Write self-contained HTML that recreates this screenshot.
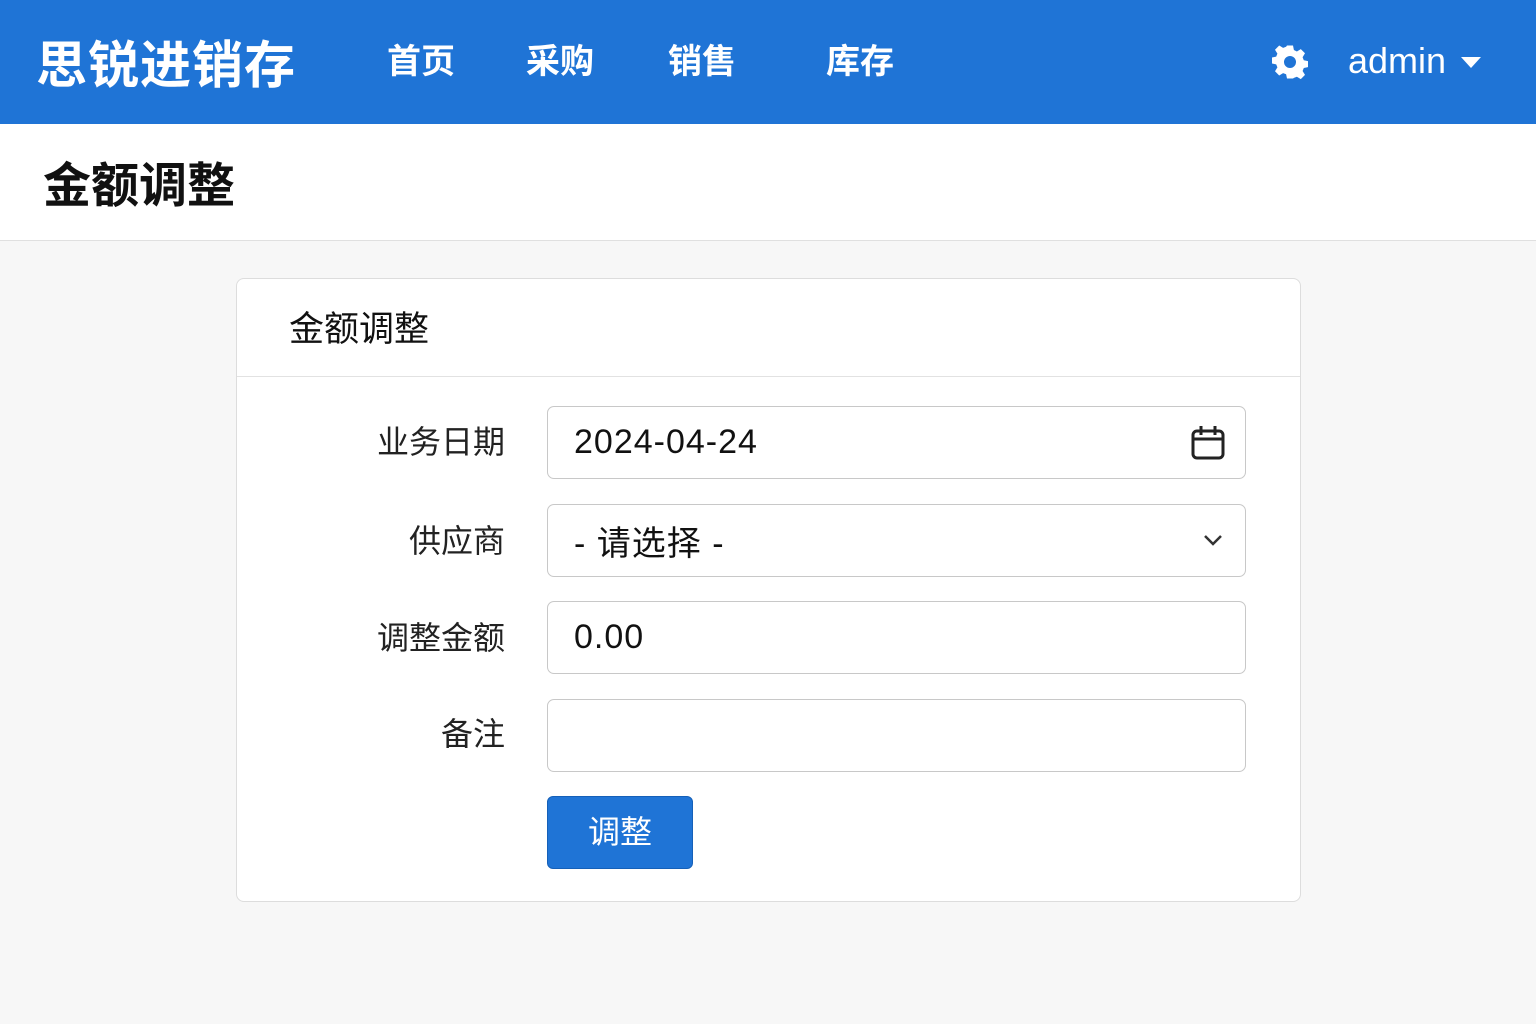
<!DOCTYPE html>
<html><head><meta charset="utf-8"><style>
*{box-sizing:border-box;margin:0;padding:0}
body{width:1536px;height:1024px;background:#f7f7f7;font-family:"Liberation Sans","Noto Sans CJK SC",sans-serif;position:relative;overflow:hidden;color:#222}
.nav{position:absolute;left:0;top:0;width:1536px;height:124px;background:#1f74d6;color:#fff}
.nav .t{position:absolute;top:34px;font-size:34px;font-weight:bold}
.brand{position:absolute;left:36px;top:24px;font-size:51px;font-weight:bold;color:#fff;letter-spacing:1px}
.hdr{position:absolute;left:0;top:124px;width:1536px;height:117px;background:#fff;border-bottom:1px solid #e0e0e0}
.card{position:absolute;left:236px;top:278px;width:1065px;height:624px;background:#fff;border:1px solid #ddd;border-radius:8px}
.card .ch{height:98px;border-bottom:1px solid #e2e2e2;font-size:35px;padding:22px 0 0 52px;color:#111}
.lbl{position:absolute;right:795px;font-size:32px;color:#222}
.inp{position:absolute;left:310px;width:699px;height:73px;border:1.5px solid #c8c8c8;border-radius:7px;font-size:34px;padding:16px 0 0 26px;letter-spacing:1px;color:#111}
.btn{position:absolute;left:310px;top:517px;width:146px;height:73px;background:#1f74d6;border:1.5px solid #1560b8;border-radius:6px;color:#fff;font-size:32px;text-align:center;line-height:70px}
</style></head><body>
<div class="nav">
<div class="brand">思锐进销存</div>
<div class="t" style="left:387px">首页</div>
<div class="t" style="left:526px">采购</div>
<div class="t" style="left:668px">销售</div>
<div class="t" style="left:826px">库存</div>
<svg style="position:absolute;left:1272px;top:44px" width="36" height="36" viewBox="0 0 24 24"><path fill="#fff" fill-rule="evenodd" d="M10 1h4l.6 3 2 1 2.6-1.6 2.8 2.8L20.4 8.8l.8 2 2.8.6v4l-2.8.6-.8 2 1.6 2.6-2.8 2.8-2.6-1.6-2 .8L14 23h-4l-.6-2.8-2-.8-2.6 1.6L2 18.2 3.6 15.6l-.8-2L0 13v-4l2.8-.6.8-2L2 3.8 4.8 1 7.4 2.6l2-.8zM12 8a4 4 0 100 8 4 4 0 000-8z"/></svg>
<div style="position:absolute;left:1348px;top:40px;font-size:36px;color:#fff">admin</div>
<svg style="position:absolute;left:1461px;top:57px" width="20" height="12"><path d="M0 0h20L10 11z" fill="#fff"/></svg>
</div>
<div class="hdr"><div style="position:absolute;left:43px;top:22px;font-size:48px;font-weight:bold;color:#111">金额调整</div></div>
<div class="card">
<div class="ch">金额调整</div>
<div class="lbl" style="top:138px">业务日期</div>
<div class="inp" style="top:127px">2024-04-24
<svg style="position:absolute;right:20px;top:18px" width="34" height="36" viewBox="0 0 34 36"><rect x="2" y="6" width="30" height="27" rx="4" fill="none" stroke="#222" stroke-width="3"/><path d="M2 14h30M10 1v9M24 1v9" stroke="#222" stroke-width="3"/></svg></div>
<div class="lbl" style="top:237px">供应商</div>
<div class="inp" style="top:225px;padding-top:11px">- 请选择 -
<svg style="position:absolute;right:22px;top:28px" width="20" height="14"><path d="M2 3l8 8 8-8" fill="none" stroke="#333" stroke-width="2.5"/></svg></div>
<div class="lbl" style="top:334px">调整金额</div>
<div class="inp" style="top:322px">0.00</div>
<div class="lbl" style="top:430px">备注</div>
<div class="inp" style="top:420px"></div>
<div class="btn">调整</div>
</div>
</body></html>
